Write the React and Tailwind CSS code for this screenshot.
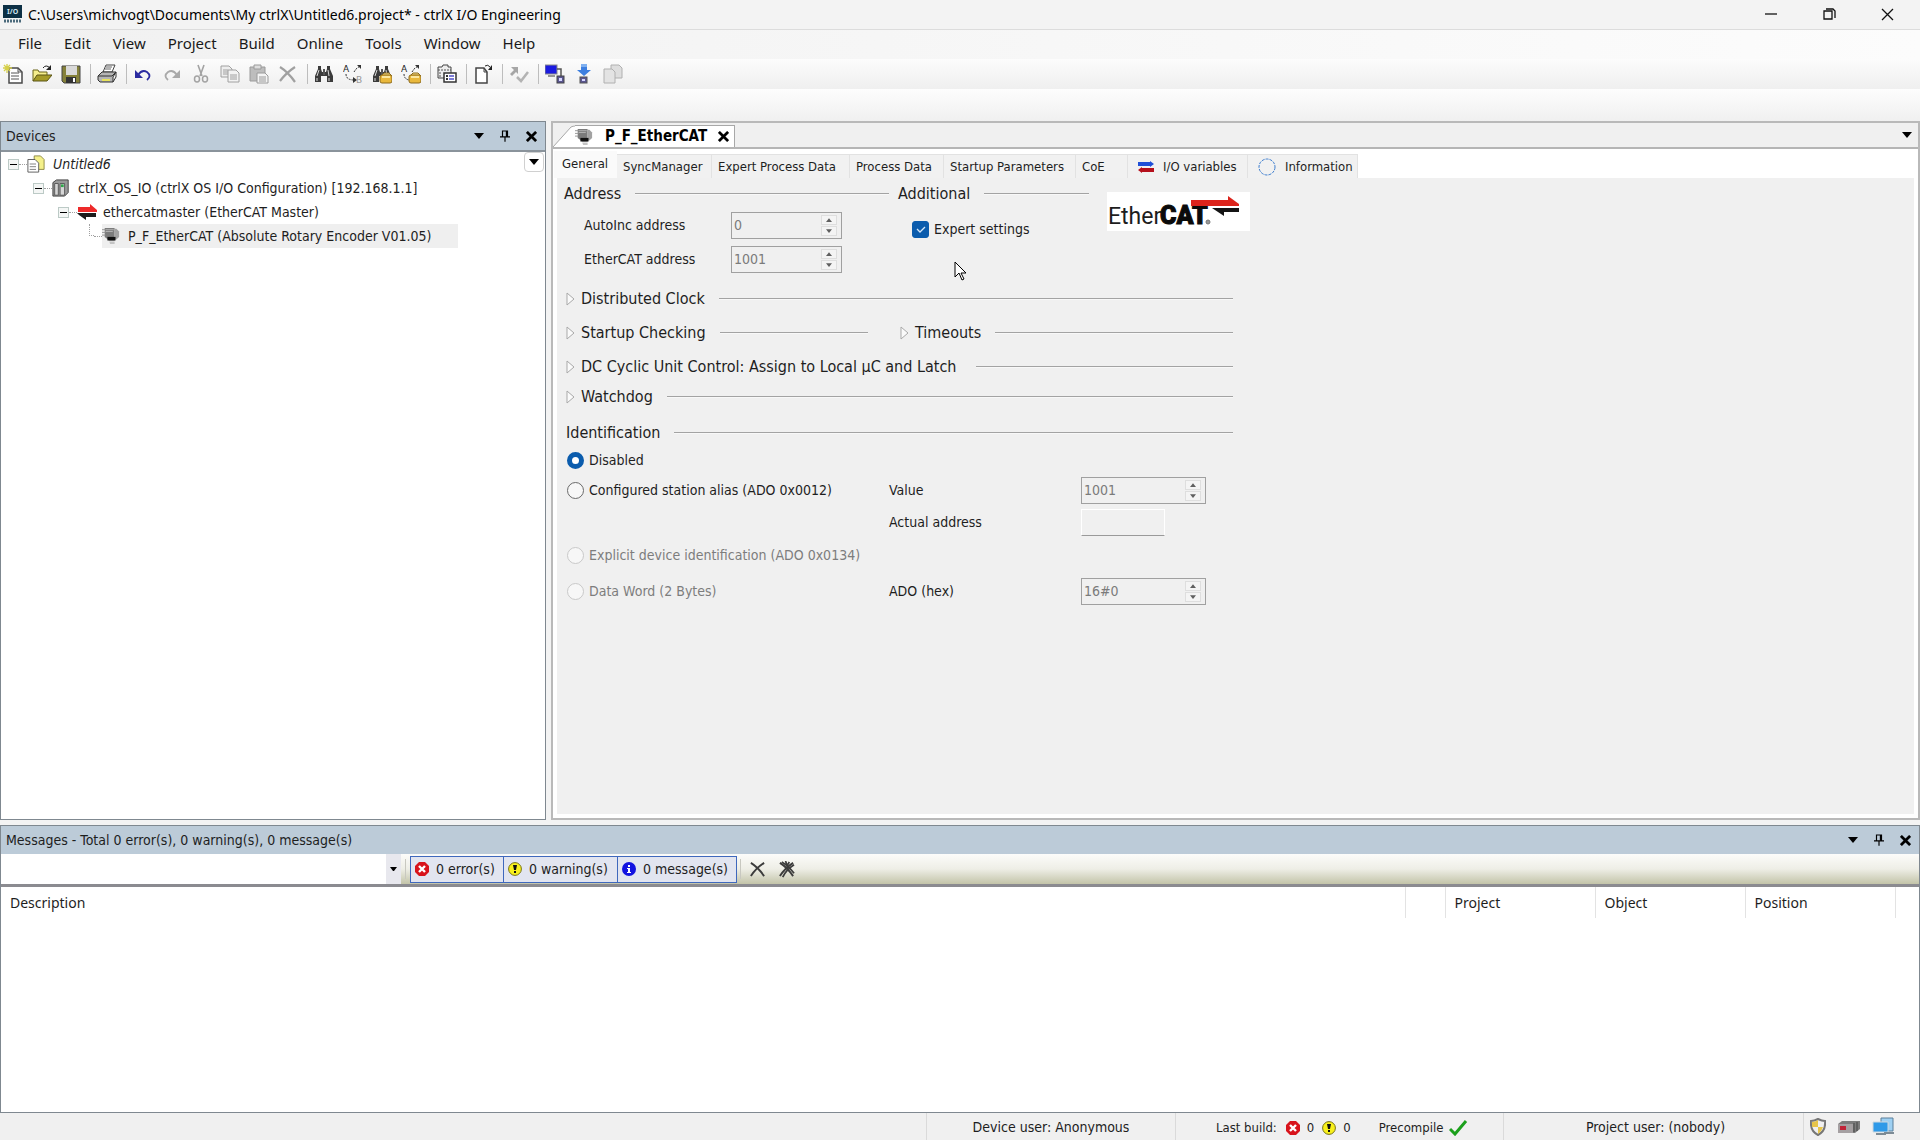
import { useState } from 'react';
import clsx from 'clsx';

const segoe = "font-['Noto_Sans','Open_Sans',sans-serif]";
const tahoma = "font-['DejaVu_Sans_Condensed','DejaVu_Sans',sans-serif]";

const menuItems = ['File', 'Edit', 'View', 'Project', 'Build', 'Online', 'Tools', 'Window', 'Help'];

/* ---------- icons ---------- */

const Svg = ({ size = 20, children, className }) => (
    <svg width={size} height={size} viewBox="0 0 20 20" fill="none" className={clsx('shrink-0', className)} aria-hidden="true">
        {children}
    </svg>
);

const Lock = () => (
    <>
        <path d="M9 12l3-3h5l3 3" fill="#f7dc82" stroke="#8c6a1c" />
        <rect x="8" y="11" width="12" height="8" rx="2" fill="#e9b83c" stroke="#8c6a1c" />
        <path d="M10 13h8" stroke="#fbe7a0" strokeWidth="2" />
    </>
);

const Binoculars = () => (
    <>
        <path d="M4 2h3v3l1 3h4l1-3V2h3v3l3 7v6h-6v-6H7v6H1v-6l3-7z" fill="#3b3b3b" />
        <path d="M5 6 3 12M14 6l1 6M3 14v3M15 14v3" stroke="#d8d8d8" />
        <path d="M9 5h2v6H9z" fill="#555" />
    </>
);

const ReplaceMarks = () => (
    <>
        <text x="0" y="8" fontSize="9" fontFamily="DejaVu Sans" fill="#222">A</text>
        <path d="M11 8l2-3 4-3" stroke="#333" strokeDasharray="2 1" />
        <path d="M14 1h4v4z" fill="#333" />
    </>
);

const toolbarIcons = {
    new: (
        <>
            <path d="M6 4h9l4 4v11H6z" fill="#fff" stroke="#4a4a4a" strokeWidth="1.5" />
            <path d="M15 4v4h4M8 9h8M8 12h8M8 15h8" stroke="#555" />
            <path d="M4 0v9M0 4h9M1 1l6 6M7 1 1 7" stroke="#d6d04a" strokeWidth="1.3" />
        </>
    ),
    open: (
        <>
            <path d="M1 17V6h5l1 2h8v3" fill="#f5ee8c" stroke="#6b651b" />
            <path d="M1 17l4-6h15l-5 6z" fill="#a59b28" stroke="#5a5515" />
            <path d="M11 4q3-4 7 0" stroke="#222" />
            <path d="M19 1v5h-5z" fill="#222" />
        </>
    ),
    save: (
        <>
            <path d="M1 2h18v17H3l-2-2z" fill="#85813a" stroke="#444" />
            <path d="M5 2h11v9H5z" fill="#d9d9d9" />
            <path d="M5 13h10v6H5z" fill="#333" />
            <path d="M12 14h2v4h-2z" fill="#fff" />
        </>
    ),
    print: (
        <>
            <path d="M6 8l3-7h9l-3 7z" fill="#fff" stroke="#444" />
            <path d="M9 3h6M8 5h6" stroke="#666" />
            <path d="M1 12l4-4h14l-3 5v5H3l-2-2z" fill="#b5b5b5" stroke="#333" />
            <path d="M1 12h14l4-4v5l-3 5" stroke="#333" />
            <path d="M5 16h8" stroke="#e8e35b" strokeWidth="2" />
        </>
    ),
    undo: (
        <>
            <path d="M5 11q4-6 9-3 5 4 0 8" stroke="#2b2ba0" strokeWidth="1.8" />
            <path d="M2 6v8h8z" fill="#2b2ba0" />
        </>
    ),
    redo: (
        <>
            <path d="M15 11Q11 5 6 8q-5 4 0 8" stroke="#a9a9a9" strokeWidth="1.8" />
            <path d="M18 6v8h-8z" fill="#a9a9a9" />
        </>
    ),
    cut: (
        <>
            <path d="M7 1l4 11M13 1 9 12" stroke="#a3a3a3" strokeWidth="1.6" />
            <ellipse cx="6" cy="15" rx="2.5" ry="3" stroke="#a3a3a3" strokeWidth="1.5" />
            <ellipse cx="14" cy="15" rx="2.5" ry="3" stroke="#a3a3a3" strokeWidth="1.5" />
        </>
    ),
    copy: (
        <>
            <path d="M1 2h8l3 3v8H1z" fill="#eee" stroke="#a0a0a0" />
            <path d="M3 6h5M3 8h5M3 10h5" stroke="#a0a0a0" />
            <path d="M8 6h8l3 3v9H8z" fill="#f3f3f3" stroke="#a0a0a0" />
            <path d="M10 11h7M10 13h7M10 15h7" stroke="#a0a0a0" />
        </>
    ),
    paste: (
        <>
            <path d="M1 3h15v14H1z" fill="#bdbdbd" stroke="#9a9a9a" />
            <path d="M5 1h7v4H5z" fill="#ddd" stroke="#9a9a9a" />
            <path d="M8 9h8l3 3v7H8z" fill="#f3f3f3" stroke="#9a9a9a" />
            <path d="M10 13h7M10 15h7M10 17h7" stroke="#9a9a9a" />
        </>
    ),
    delete: <path d="M2 3q8 5 15 15M17 3Q8 9 2 17" stroke="#a0a0a0" strokeWidth="2.2" />,
    find: <Binoculars />,
    replace: (
        <>
            <ReplaceMarks />
            <path d="M3 10q0 6 8 6" stroke="#333" strokeDasharray="2 1" />
            <path d="M10 13v6l4-3z" fill="#333" />
            <text x="13" y="19" fontSize="9" fontFamily="DejaVu Sans" fill="#999">B</text>
        </>
    ),
    findProject: (
        <>
            <Binoculars />
            <Lock />
        </>
    ),
    replaceProject: (
        <>
            <ReplaceMarks />
            <path d="M3 10q0 5 5 6" stroke="#333" strokeDasharray="2 1" />
            <Lock />
        </>
    ),
    browse: (
        <>
            <path d="M1 14V3h4l1-2h5v2h3v11z" fill="#eee" stroke="#444" />
            <path d="M1 6h13M3 8v5" stroke="#555" strokeDasharray="2 1" />
            <path d="M7 9h12v9H7z" fill="#fff" stroke="#333" strokeWidth="1.5" />
            <path d="M9 12h2M9 15h2" stroke="#333" strokeWidth="2" />
            <path d="M12 12h5M12 15h5" stroke="#5050c8" strokeWidth="1.5" />
        </>
    ),
    addObject: (
        <>
            <path d="M3 4h8l3 4v11H3z" fill="#fff" stroke="#444" strokeWidth="1.5" />
            <path d="M11 4v4h3" stroke="#444" />
            <path d="M12 2q3-2 5 1" stroke="#222" />
            <path d="M19 1v5h-4z" fill="#222" />
        </>
    ),
    build: (
        <>
            <path d="M2 3h7v7L7 8l-4 4-2-2 4-4z" fill="#a6a6a6" />
            <path d="M8 13l4 4 7-9" stroke="#b3b3b3" strokeWidth="2.5" />
        </>
    ),
    login: (
        <>
            <rect x="0" y="1" width="12" height="9" fill="#1b1be0" stroke="#8a8a8a" />
            <path d="M3 12h7" stroke="#777" strokeWidth="1.5" />
            <path d="M12 5h4v7" stroke="#555" strokeWidth="1.5" />
            <rect x="12" y="12" width="7" height="7" fill="#5a5690" stroke="#444" />
            <rect x="14" y="14" width="3" height="3" fill="#d7d7ff" />
        </>
    ),
    download: (
        <>
            <path d="M7 0h6v6h4l-7 6-7-6h4z" fill="#3d7fe0" />
            <path d="M7 0h6v3H7z" fill="#7fb0f0" />
            <rect x="6" y="13" width="7" height="6" fill="#5a5690" stroke="#555" />
            <rect x="8" y="15" width="3" height="2" fill="#d7d7ff" />
        </>
    ),
    compare: (
        <>
            <path d="M8 1h8l3 3v10H8z" fill="#dedede" stroke="#b0b0b0" />
            <path d="M1 5h8l3 3v11H1z" fill="#e3e3e3" stroke="#b0b0b0" />
        </>
    ),
};

const toolbar = [
    ['new', 'New Project'], ['open', 'Open Project'], ['save', 'Save Project'], null,
    ['print', 'Print'], null,
    ['undo', 'Undo'], ['redo', 'Redo'], ['cut', 'Cut'], ['copy', 'Copy'], ['paste', 'Paste'], ['delete', 'Delete'], null,
    ['find', 'Find'], ['replace', 'Replace'], ['findProject', 'Find in Project'], ['replaceProject', 'Replace in Project'], null,
    ['browse', 'Browse'], null,
    ['addObject', 'Add Object'], null,
    ['build', 'Build'], null,
    ['login', 'Login'], ['download', 'Download'], ['compare', 'Compare'],
];

const CaretDown = () => (
    <svg width="10" height="6" viewBox="0 0 10 6" aria-hidden="true">
        <path d="M0 0h10L5 6z" fill="#000" />
    </svg>
);

const Pin = () => (
    <svg width="10" height="12" viewBox="0 0 12 14" fill="none" stroke="#000" aria-hidden="true">
        <path d="M3 8V1h6v7M0 8h12M6 8v6" strokeWidth="1.4" />
        <path d="M8 1v7" strokeWidth="2" />
    </svg>
);

const BoldX = () => (
    <svg width="11" height="11" viewBox="0 0 12 12" stroke="#000" strokeWidth="3" aria-hidden="true">
        <path d="M1 1l10 10M11 1 1 11" />
    </svg>
);

const DeviceIcon = () => (
    <Svg size={18}>
        <path d="M3 1h11v14H8l-5-4z" fill="#7c7c7c" />
        <path d="M0 3h4M0 6h4M0 9h4" stroke="#8f8f8f" />
        <path d="M14 2h2l3 3v6l-3 3h-2z" fill="#a2a2a2" />
        <path d="M6 11h9v4H6z" fill="#111" />
        <path d="M4 3h9M4 5h8" stroke="#b6b6b6" />
        <path d="M8 16h6v3H9z" fill="#c4c4c4" />
    </Svg>
);

const ProjectIcon = () => (
    <Svg size={18}>
        <path d="M8 1h7l4 4v11H8z" fill="#f4f08a" stroke="#8a8540" />
        <path d="M1 5h8l4 4v10H1z" fill="#fff" stroke="#555" />
        <path d="M3 10h7M3 13h7M3 16h7" stroke="#777" />
    </Svg>
);

const ControllerIcon = () => (
    <Svg size={18}>
        <path d="M1 4l4-3h13v14l-4 4H1z" fill="#9a9a9a" stroke="#3b3b3b" />
        <path d="M3 5h4v13H3zM9 5h5v13H9z" fill="#d6d6d6" stroke="#555" />
        <path d="M10 6h3v3h-3z" fill="#2fa84a" />
    </Svg>
);

const BusIcon = () => (
    <svg width="20" height="16" viewBox="0 0 20 16" aria-hidden="true" className="shrink-0">
        <path d="M1 3h12V0l7 6v2H1z" fill="#ee2a2a" />
        <path d="M0 9h19v4H9v3L2 11z" fill="#1c1c1c" />
    </svg>
);

const ErrorIcon = () => (
    <svg width="14" height="14" viewBox="0 0 14 14" aria-hidden="true">
        <path d="M4 0h6l4 4v6l-4 4H4l-4-4V4z" fill="#d8141c" />
        <path d="M4 4l6 6M10 4l-6 6" stroke="#fff" strokeWidth="2.4" />
    </svg>
);

const WarningIcon = () => (
    <svg width="14" height="14" viewBox="0 0 14 14" aria-hidden="true">
        <circle cx="7" cy="7" r="6.4" fill="#f8f01c" stroke="#77721a" />
        <path d="M5 3h4L8 8H6z" fill="#111" />
        <rect x="6" y="9" width="2" height="2" fill="#111" />
    </svg>
);

const InfoIcon = () => (
    <svg width="14" height="14" viewBox="0 0 14 14" aria-hidden="true">
        <circle cx="7" cy="7" r="7" fill="#1212e0" />
        <path d="M6 3h2v2H6zM5 6h3v4h1v1H5v-1h1V7H5z" fill="#fff" />
    </svg>
);

const ThinX = ({ double }) => (
    <svg width="17" height="17" viewBox="0 0 18 18" fill="none" stroke="#3c3c3c" aria-hidden="true">
        <path d="M2 2q8 5 14 14M16 2Q7 8 2 16" strokeWidth="2" />
        {double && <path d="M4 1q7 4 13 12M17 4Q9 9 5 17M8 0l2 6M12 1 9 6" strokeWidth="1.8" />}
    </svg>
);

const EtherCatLogo = () => (
    <svg width="143" height="39" viewBox="0 0 143 39" className="bg-white" role="img" aria-label="EtherCAT logo">
        <text x="1" y="32" fontSize="23" fontFamily="Roboto, sans-serif" fill="#1d1d1d">Ether</text>
        <text x="53" y="32" fontSize="25" fontWeight="900" fontFamily="Roboto, sans-serif" fill="#0a0a0a" stroke="#0a0a0a">CAT</text>
        <circle cx="101" cy="30" r="2" fill="#999" stroke="#777" />
        <path d="M84 8h37V4l11 8v2H84z" fill="#dc241c" />
        <path d="M105 16h27v4h-15v4z" fill="#141414" />
    </svg>
);

const MouseCursor = () => (
    <svg width="12" height="20" viewBox="0 0 12 20" className="absolute top-[83px] left-[397px]" aria-hidden="true">
        <path d="M1 1v15l4-4 3 7 2-1-3-6h5z" fill="#fff" stroke="#000" strokeLinejoin="round" />
    </svg>
);

/* ---------- window frame ---------- */

const TitleBar = () => (
    <header className={clsx('flex h-[29px] shrink-0 items-center bg-[#f3f3f3] pl-[3px] text-[14px] text-black', segoe)}>
        <svg width="19" height="19" viewBox="0 0 19 19" aria-hidden="true">
            <rect width="19" height="13" fill="#0c2f44" />
            <text x="4" y="9" fontSize="7" fontWeight="bold" fontFamily="Noto Sans" fill="#cfe3ee">I/O</text>
            <path d="M1 16h17" stroke="#4c6b7c" strokeWidth="3" strokeDasharray="2 1" />
        </svg>
        <h1 className="ml-[6px] flex-1 whitespace-nowrap">C:\Users\michvogt\Documents\My ctrlX\Untitled6.project* - ctrlX I/O Engineering</h1>
        {[
            ['Minimize', <path key="p" d="M0 6h12" />],
            ['Restore', <path key="p" d="M1 3h8v8H1zM3 1h7l2 2v7" />],
            ['Close', <path key="p" d="M1 1l11 11M12 1 1 12" />],
        ].map(([label, icon]) => (
            <button key={label} type="button" aria-label={label} className="flex h-full w-[58px] items-center justify-center">
                <svg width="13" height="13" viewBox="0 0 13 13" fill="none" stroke="#111" strokeWidth="1.3">{icon}</svg>
            </button>
        ))}
        <span className="w-1" />
    </header>
);

const MenuBar = () => (
    <nav className={clsx('flex h-[30px] shrink-0 items-center border-t border-[#dcdcdc] bg-linear-to-r from-[#f1f1f1] to-[#fcfcfc] pb-[2px] pl-[7px] text-[15px] text-[#1a1a1a]', segoe)}>
        {menuItems.map((item) => (
            <button key={item} type="button" className="px-[11px]">{item}</button>
        ))}
    </nav>
);

const Toolbar = () => (
    <div className="flex h-[30px] shrink-0 items-center bg-linear-to-b from-[#fcfcfc] to-[#efefef]">
        {toolbar.map((entry, i) =>
            entry ? (
                <button key={entry[0]} type="button" title={entry[1]} aria-label={entry[1]} className="flex w-[29px] items-center pl-[3px]">
                    <Svg>{toolbarIcons[entry[0]]}</Svg>
                </button>
            ) : (
                <span key={`sep-${i}`} className="mx-[3px] h-5 w-px bg-[#bdbdbd]" />
            )
        )}
    </div>
);

const PanelHeader = ({ title }) => (
    <div className="flex h-7 shrink-0 items-center bg-[#bccbd8] px-[5px] text-[#1e1e1e]">
        <h2 className="flex-1 text-[14px]">{title}</h2>
        <div className="flex items-center gap-4 pr-[3px]">
            <button type="button" aria-label="Panel menu"><CaretDown /></button>
            <button type="button" aria-label="Pin panel"><Pin /></button>
            <button type="button" aria-label="Close panel"><BoldX /></button>
        </div>
    </div>
);

/* ---------- device tree ---------- */

const tree = [
    { label: 'Untitled6', icon: <ProjectIcon />, indent: 'pl-[7px]', open: true, italic: true },
    { label: 'ctrlX_OS_IO (ctrlX OS I/O Configuration) [192.168.1.1]', icon: <ControllerIcon />, indent: 'pl-[32px]', open: true },
    { label: 'ethercatmaster (EtherCAT Master)', icon: <BusIcon />, indent: 'pl-[57px]', open: true },
    { label: 'P_F_EtherCAT (Absolute Rotary Encoder V01.05)', icon: <DeviceIcon />, indent: 'pl-[82px]', selected: true },
];

const DevicesPanel = () => (
    <section className="flex w-[546px] shrink-0 flex-col border border-[#7f8890] bg-white">
        <PanelHeader title="Devices" />
        <div className="relative flex-1 border-t-2 border-[#8a939b]">
            <ul role="tree" className="text-[14px] text-[#1e1e1e]">
                {tree.map((node) => (
                    <li key={node.label} role="treeitem" aria-selected={!!node.selected} className={clsx('flex h-6 items-center', node.indent)}>
                        {node.open ? (
                            <button type="button" aria-label="Collapse" className="flex size-[11px] items-center justify-center border border-[#bccac6] bg-[#f4f6f5]">
                                <span className="h-px w-[7px] bg-black" />
                            </button>
                        ) : (
                            <span className="mb-3 ml-[6px] h-3 w-[5px] border-b border-l border-dotted border-[#a0a0a0]" />
                        )}
                        <span className="w-2 border-t border-dotted border-[#a0a0a0]" />
                        <span className={clsx('flex h-6 items-center', node.selected && 'bg-[#efefef] pr-[27px]')}>
                            <span className="flex w-[26px] items-center">{node.icon}</span>
                            <span className={clsx('whitespace-nowrap', node.italic && 'italic')}>{node.label}</span>
                        </span>
                    </li>
                ))}
            </ul>
            <button type="button" aria-label="Tree options" className="absolute top-0 right-px flex size-5 items-center justify-center rounded-sm border border-[#d0d0d0] bg-white">
                <CaretDown />
            </button>
        </div>
    </section>
);

/* ---------- editor ---------- */

const tabs = [
    { label: 'General', width: 'w-[63px]' },
    { label: 'SyncManager', width: 'w-[95px]' },
    { label: 'Expert Process Data', width: 'w-[138px]' },
    { label: 'Process Data', width: 'w-[94px]' },
    { label: 'Startup Parameters', width: 'w-[132px]' },
    { label: 'CoE', width: 'w-[52px]' },
    {
        label: 'I/O variables',
        width: 'w-[120px]',
        icon: (
            <svg width="16" height="12" viewBox="0 0 16 12" aria-hidden="true">
                <path d="M0 1h12V0l4 3-4 3V5H0z" fill="#1f4fd8" />
                <path d="M16 7H4V6L0 9l4 3v-1h12z" fill="#b5101c" />
            </svg>
        ),
    },
    {
        label: 'Information',
        width: 'w-[110px]',
        icon: (
            <svg width="18" height="18" viewBox="0 0 18 18" fill="none" aria-hidden="true">
                <circle cx="9" cy="9" r="8" stroke="#3f7fd0" strokeDasharray="3 1" />
            </svg>
        ),
    },
];

const Rule = () => <span className="h-[2px] flex-1 border-t border-[#a3a3a3] bg-[#f8f8f8]" />;

const Heading = ({ children, gap = 'gap-[14px]', className }) => (
    <div className={clsx('flex h-5 items-center', gap, className)}>
        <h3 className="whitespace-nowrap">{children}</h3>
        <Rule />
    </div>
);

const Collapsible = ({ children, gap = 'gap-[14px]', className }) => (
    <div className={clsx('flex h-5 items-center', gap, className)}>
        <button type="button" aria-expanded="false" className="flex items-center gap-[6px] whitespace-nowrap">
            <svg width="9" height="14" viewBox="0 0 9 14" fill="#fafafa" stroke="#a9a9a9" aria-hidden="true">
                <path d="M1 1v12l7-6z" />
            </svg>
            {children}
        </button>
        <Rule />
    </div>
);

const Spinner = ({ id, value, className }) => (
    <div className={clsx('flex h-[27px] items-center border border-[#a0a0a0] bg-[#f0f0f0] pr-1', className)}>
        <input id={id} defaultValue={value} disabled className="w-0 min-w-0 flex-1 bg-transparent pl-[2px] text-[14px] text-[#7b7b7b]" />
        <span className="flex flex-col gap-px">
            {[['Increase', 'M0 5h8L4 0z'], ['Decrease', 'M0 0h8L4 5z']].map(([label, d]) => (
                <button key={label} type="button" disabled aria-label={label} className="flex h-[10px] w-4 items-center justify-center border border-[#dedede] bg-[#f4f4f4]">
                    <svg width="6" height="4" viewBox="0 0 8 5"><path d={d} fill="#5f5f5f" /></svg>
                </button>
            ))}
        </span>
    </div>
);

const Radio = ({ label, disabled, checked, onChange, className }) => (
    <label className={clsx('flex items-center gap-[5px] whitespace-nowrap', disabled && 'text-[#7d7d7d]', className)}>
        <input
            type="radio"
            name="identification"
            disabled={disabled}
            checked={checked}
            onChange={onChange}
            className={clsx(
                'size-[17px] appearance-none rounded-full border bg-[#f7f7f7] checked:border-[5px] checked:border-[#0b5cad] checked:bg-white',
                disabled ? 'border-[#c9c9c9]' : 'border-[#6a6a6a]'
            )}
        />
        {label}
    </label>
);

const GeneralPage = () => {
    const [expert, setExpert] = useState(true);
    const [identification, setIdentification] = useState('disabled');

    return (
        <div className="relative w-full max-w-[720px] pt-[6px] pl-[7px] text-[16px] text-[#1e1e1e]">
            <div className="flex">
                <div className="w-[325px]">
                    <Heading>Address</Heading>
                    <div className="mt-2 grid grid-cols-[147px_111px] items-center gap-y-[7px] pl-5 text-[14px]">
                        <label htmlFor="autoinc">AutoInc address</label>
                        <Spinner id="autoinc" value="0" />
                        <label htmlFor="ecat">EtherCAT address</label>
                        <Spinner id="ecat" value="1001" />
                    </div>
                </div>
                <div className="ml-[9px] w-[191px]">
                    <Heading>Additional</Heading>
                    <label className="mt-[15px] ml-[14px] flex h-5 items-center gap-[5px] text-[14px]">
                        <span className="grid size-[17px]">
                            <input
                                type="checkbox"
                                checked={expert}
                                onChange={(e) => setExpert(e.target.checked)}
                                className="peer col-start-1 row-start-1 size-[17px] appearance-none rounded-[3px] border border-[#0b5cad] checked:bg-[#0b5cad]"
                            />
                            <svg viewBox="0 0 17 17" fill="none" stroke="#d5e8fa" strokeWidth="1.3" className="pointer-events-none invisible col-start-1 row-start-1 peer-checked:visible">
                                <path d="M5 8l3 3 5-5" />
                            </svg>
                        </span>
                        Expert settings
                    </label>
                </div>
                <div className="ml-[18px] pt-2">
                    <EtherCatLogo />
                </div>
            </div>
            <MouseCursor />

            <div className="mt-4 w-[669px] pl-[2px]">
                <Collapsible>Distributed Clock</Collapsible>
                <div className="mt-[14px] flex">
                    <Collapsible className="w-[302px]">Startup Checking</Collapsible>
                    <Collapsible className="ml-8 flex-1">Timeouts</Collapsible>
                </div>
                <Collapsible className="mt-[14px]" gap="gap-5">DC Cyclic Unit Control: Assign to Local µC and Latch</Collapsible>
                <Collapsible className="mt-[10px]">Watchdog</Collapsible>
                <Heading className="mt-4">Identification</Heading>
            </div>

            <div className="mt-[7px] grid w-[645px] grid-cols-[322px_192px_125px] items-center pl-[3px] text-[14px]">
                <Radio className="col-span-3 h-5" label="Disabled" checked={identification === 'disabled'} onChange={() => setIdentification('disabled')} />
                <Radio className="mt-[7px]" label="Configured station alias (ADO 0x0012)" checked={identification === 'alias'} onChange={() => setIdentification('alias')} />
                <label htmlFor="alias-value" className="mt-[7px]">Value</label>
                <Spinner id="alias-value" value="1001" className="mt-[7px]" />
                <label htmlFor="actual" className="col-start-2 mt-[5px]">Actual address</label>
                <input id="actual" readOnly className="mt-[5px] h-[27px] w-[84px] border border-white border-b-[#9a9a9a] bg-[#f0f0f0] px-1" />
                <Radio className="col-span-3 mt-[9px] h-5" disabled label="Explicit device identification (ADO 0x0134)" checked={false} onChange={() => {}} />
                <Radio className="mt-[13px]" disabled label="Data Word (2 Bytes)" checked={false} onChange={() => {}} />
                <label htmlFor="ado" className="mt-[13px]">ADO (hex)</label>
                <Spinner id="ado" value="16#0" className="mt-[13px]" />
            </div>
        </div>
    );
};

const Editor = () => (
    <section className="flex min-w-0 flex-1 flex-col border-2 border-[#b9b9b9] bg-white">
        <div className="flex h-[26px] shrink-0 items-end justify-between border-b-2 border-[#b5b5b5] bg-[#f0f0f0]">
            <div className="flex">
                <svg width="22" height="22" viewBox="0 0 22 22" aria-hidden="true">
                    <path d="M0 22 18 2l4-2v22z" fill="#fff" />
                    <path d="M0 22 18 2q2-1 4-1" fill="none" stroke="#a8a8a8" />
                </svg>
                <div className="flex h-[22px] items-center border-t border-r border-[#a8a8a8] bg-white pr-[5px]">
                    <DeviceIcon />
                    <span className="ml-3 text-[15px] font-bold text-black">P_F_EtherCAT</span>
                    <button type="button" aria-label="Close editor" className="ml-[11px]"><BoldX /></button>
                </div>
            </div>
            <button type="button" aria-label="Open editors" className="mr-[6px] self-center"><CaretDown /></button>
        </div>
        <div role="tablist" className="flex h-[29px] shrink-0 items-end pt-[2px] pl-px text-[13px] text-[#1e1e1e]">
            {tabs.map((tab, i) => (
                <button
                    key={tab.label}
                    type="button"
                    role="tab"
                    aria-selected={i === 0}
                    className={clsx(
                        'flex shrink-0 items-center gap-[9px] whitespace-nowrap',
                        tab.width,
                        i === 0 ? 'h-[27px] bg-[#fafafa] pb-[2px] pl-2' : 'h-6 border-t border-r border-[#e2e2e2] bg-[#f1f1f1]',
                        i > 0 && (tab.icon ? 'pl-[10px]' : 'pl-[6px]')
                    )}
                >
                    {tab.icon}
                    {tab.label}
                </button>
            ))}
        </div>
        <div role="tabpanel" className="mx-1 mb-1 flex-1 bg-[#f0f0f0]">
            <GeneralPage />
        </div>
    </section>
);

/* ---------- messages ---------- */

const filters = [
    ['0 error(s)', ErrorIcon, 'w-[94px]'],
    ['0 warning(s)', WarningIcon, 'w-[115px]'],
    ['0 message(s)', InfoIcon, 'w-[120px]'],
];

const MessagesPanel = () => (
    <section className="flex h-[288px] shrink-0 flex-col border border-[#7f8890] bg-white">
        <PanelHeader title="Messages - Total 0 error(s), 0 warning(s), 0 message(s)" />
        <div className="flex h-[30px] shrink-0 items-center bg-linear-to-b from-[#fcfcfa] via-[#eeeee6] to-[#c3c4a9] text-[#1e1e1e]">
            <div className="flex h-full w-[400px] bg-white">
                <input aria-label="Message category" className="h-full min-w-0 flex-1 px-1 text-[14px] outline-none" />
                <button type="button" aria-label="Show categories" className="flex w-[15px] items-center justify-center bg-[#e8e8ee]">
                    <svg width="7" height="4" viewBox="0 0 7 4"><path d="M0 0h7L4 4H3z" fill="#000" /></svg>
                </button>
            </div>
            <span className="mx-1 h-5 w-px bg-[#c8c8c0]" />
            {filters.map(([label, Icon, width]) => (
                <button key={label} type="button" className={clsx('-mr-px flex h-[27px] items-center gap-[7px] whitespace-nowrap border border-[#3f68bd] bg-[#e2e5f0] pl-1 text-[14px]', width)}>
                    <Icon />
                    {label}
                </button>
            ))}
            <span className="mx-1 h-5 w-px bg-[#c8c8c0]" />
            <button type="button" aria-label="Clear message" className="ml-1"><ThinX /></button>
            <button type="button" aria-label="Clear all messages" className="ml-3"><ThinX double /></button>
        </div>
        <div className="flex-1 border-t-[3px] border-[#8b8b90]">
            <table className={clsx('w-full table-fixed text-left text-[14px] text-[#1e1e1e]', segoe)}>
                <colgroup>
                    <col />
                    <col className="w-10" />
                    <col className="w-[150px]" />
                    <col className="w-[150px]" />
                    <col className="w-[150px]" />
                    <col className="w-6" />
                </colgroup>
                <thead>
                    <tr className="h-[31px]">
                        {['Description', '', 'Project', 'Object', 'Position'].map((name, i) => (
                            <th key={i} scope="col" className="border-r border-[#e3e3e3] pl-[9px] font-normal">{name}</th>
                        ))}
                        <td />
                    </tr>
                </thead>
                <tbody />
            </table>
        </div>
    </section>
);

const StatusBar = () => (
    <footer className="flex h-[27px] shrink-0 items-stretch justify-end bg-[#f0f0f0] text-[14px] text-[#1e1e1e]">
        <div className="flex w-[249px] items-center justify-center border-l border-[#dadada] pt-[2px]">Device user: Anonymous</div>
        <div className="flex w-[328px] items-center border-l border-[#dadada] pt-[2px] pl-10 text-[13px] whitespace-nowrap">
            <span>Last build:</span>
            <span className="ml-[9px] flex items-center gap-[7px]"><ErrorIcon /> 0</span>
            <span className="ml-2 flex items-center gap-[7px]"><WarningIcon /> 0</span>
            <span className="ml-7 flex items-center gap-[6px]">
                Precompile
                <svg width="19" height="16" viewBox="0 0 19 16" fill="none" aria-hidden="true">
                    <path d="M1 9l5 5L17 1" stroke="#1ca01c" strokeWidth="3" />
                </svg>
            </span>
        </div>
        <div className="flex w-[300px] items-center justify-center border-l border-[#dadada] pt-[2px] pl-1">Project user: (nobody)</div>
        <div className="flex w-[117px] items-center gap-[11px] border-l border-[#dadada] pl-[6px]">
            <svg width="16" height="18" viewBox="0 0 16 18" aria-hidden="true">
                <path d="M8 1q4 2 7 2 1 10-7 14Q0 13 1 3q3 0 7-2z" fill="#f0f0f0" stroke="#777" strokeWidth="2" />
                <path d="M8 2v7H2V4q3 0 6-2zM8 9h5q-1 4-5 7z" fill="#e7c54a" />
            </svg>
            <svg width="24" height="14" viewBox="0 0 24 14" aria-hidden="true">
                <path d="M1 4l4-3h18v8l-5 4H1z" fill="#7c7c7c" />
                <path d="M1 4h15v9H1z" fill="#a5a0a2" />
                <path d="M3 6h6v4H3z" fill="#c02438" />
                <path d="M17 3v9M20 2v9" stroke="#444" />
            </svg>
            <svg width="24" height="20" viewBox="0 0 24 20" aria-hidden="true">
                <path d="M9 1h12v13H9z" fill="#9ed0f2" stroke="#5b7f9a" />
                <path d="M1 5h15v10H1z" fill="#2f9ae8" stroke="#cfd8de" />
                <path d="M4 17h10M12 16h10" stroke="#7d8b95" strokeWidth="2" />
            </svg>
        </div>
    </footer>
);

const App = () => (
    <div className={clsx('flex h-screen flex-col overflow-hidden bg-[#f3f3f3]', tahoma)}>
        <TitleBar />
        <MenuBar />
        <Toolbar />
        <div className="h-8 shrink-0 bg-linear-to-b from-[#fdfdfd] to-[#f0f0f0]" />
        <main className="flex min-h-0 flex-1 gap-[5px]">
            <DevicesPanel />
            <Editor />
        </main>
        <div className="h-[5px] shrink-0" />
        <MessagesPanel />
        <StatusBar />
    </div>
);

export default App;
